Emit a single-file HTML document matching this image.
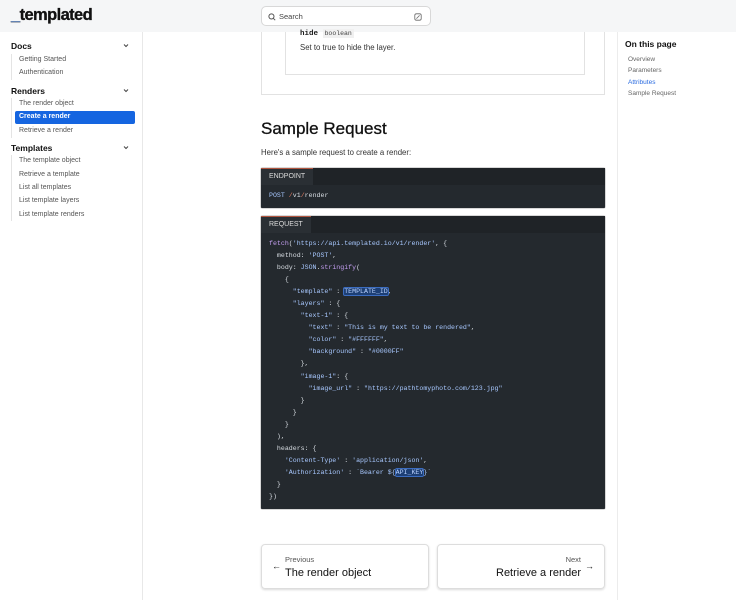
<!DOCTYPE html>
<html><head><meta charset="utf-8"><style>
*{box-sizing:border-box;margin:0;padding:0}
body{width:736px;height:600px;overflow:hidden;background:#fff;font-family:"Liberation Sans",sans-serif;color:#1a1a1a;position:relative}
.hdr{position:absolute;left:0;top:0;width:736px;height:32px;background:#f5f6f7;z-index:5}
.logo{position:absolute;left:11px;top:6px;font-size:16.5px;font-weight:bold;letter-spacing:-0.6px;color:#111;-webkit-text-stroke:0.3px #111}
.logo span{color:#1565e0}
.search{position:absolute;left:261px;top:6px;width:170px;height:20px;border:1px solid #d8d8d8;border-radius:5px;background:#fff;font-size:7.5px;color:#444;padding:5px 0 0 17px}
.side{position:absolute;left:0;top:32px;width:143px;height:568px;border-right:1px solid #e8e8e8}
.grp{position:absolute;left:11px;font-size:8.5px;font-weight:bold;color:#111}
.chev{position:absolute;left:123px}
.item{position:absolute;left:19px;font-size:7px;color:#555}
.vl{position:absolute;left:11px;width:1px;background:#e4e4e4}
.act{position:absolute;left:15px;width:120px;height:13px;background:#1565e0;border-radius:2px;color:#fff;font-size:7px;font-weight:bold;padding:2px 0 0 4px}
.rside{position:absolute;left:617px;top:32px;width:1px;height:568px;background:#ececec}
.toc h4{position:absolute;left:625px;top:39px;font-size:8.5px;color:#111}
.t{position:absolute;left:628px;font-size:6.5px;color:#666}
.box{position:absolute;left:261px;top:20px;width:344px;height:75px;border:1px solid #e2e2e2;border-top:none}
.inner{position:absolute;left:285px;top:20px;width:300px;height:55px;border:1px solid #e2e2e2;border-top:none}
.mono{font-family:"Liberation Mono",monospace}
h2{position:absolute;left:261px;top:119px;font-size:17px;font-weight:500;color:#111;-webkit-text-stroke:0.3px #111}
.p{position:absolute;left:261px;top:148px;font-size:7.8px;color:#333}
.code{position:absolute;left:261px;background:#24292e;border-radius:1px;box-shadow:0 0 1px #000}
.tab{height:17px;background:#1f2327;font-size:7px;color:#ddd;padding:4px 0 0 8px;position:relative}
.tab b{font-weight:normal;position:absolute;left:0;top:0;height:17px;background:#2a2f34;padding:4px 8px;border-top:1px solid #b0553f}
pre{font-family:"Liberation Mono",monospace;font-size:6.6px;line-height:12.05px;color:#d8dde3;padding:0 8px}
.k{color:#a8c8ff}.s{color:#a8c8ff}.f{color:#c39ef0}.h{background:#1d3f75;outline:1px solid #3b6cc0;border-radius:1px;color:#b9d2ff}
.nav{position:absolute;top:544px;width:168px;height:45px;border:1px solid #ddd;border-radius:4px;box-shadow:0 1px 2px rgba(0,0,0,.15)}
.nav .a{position:absolute;top:10px;font-size:7.5px;color:#555}
.nav .b{position:absolute;top:22px;font-size:11px;color:#111}
.nav .ar{position:absolute;top:16px;font-size:9px;color:#222}
</style></head><body>
<div class="hdr"><div class="logo"><span>_</span>templated</div>
<div class="search"><svg style="position:absolute;left:6px;top:6px" width="8" height="8" viewBox="0 0 10 10"><circle cx="4.3" cy="4.3" r="3.2" fill="none" stroke="#555" stroke-width="1.2"/><path d="M6.6 6.6L9 9" stroke="#555" stroke-width="1.2"/></svg>Search<svg style="position:absolute;left:152px;top:6px" width="8" height="8" viewBox="0 0 10 10"><rect x="1" y="1" width="8" height="8" rx="2" fill="none" stroke="#666"/><path d="M3 7L7 3" stroke="#666"/></svg></div></div>

<div class="side">
<div class="grp" style="top:9px">Docs</div><svg class="chev" style="top:11px" width="6" height="5" viewBox="0 0 6 5"><path d="M1 1.5L3 3.5L5 1.5" fill="none" stroke="#444" stroke-width="1"/></svg>
<div class="vl" style="top:22px;height:26px"></div>
<div class="item" style="top:24px">Getting Started</div>
<div class="item" style="top:37px">Authentication</div>
<div class="grp" style="top:54px">Renders</div><svg class="chev" style="top:56px" width="6" height="5" viewBox="0 0 6 5"><path d="M1 1.5L3 3.5L5 1.5" fill="none" stroke="#444" stroke-width="1"/></svg>
<div class="vl" style="top:66px;height:40px"></div>
<div class="item" style="top:68px">The render object</div>
<div class="act" style="top:79px">Create a render</div>
<div class="item" style="top:95px">Retrieve a render</div>
<div class="grp" style="top:111px">Templates</div><svg class="chev" style="top:113px" width="6" height="5" viewBox="0 0 6 5"><path d="M1 1.5L3 3.5L5 1.5" fill="none" stroke="#444" stroke-width="1"/></svg>
<div class="vl" style="top:123px;height:66px"></div>
<div class="item" style="top:125px">The template object</div>
<div class="item" style="top:139px">Retrieve a template</div>
<div class="item" style="top:152px">List all templates</div>
<div class="item" style="top:165px">List template layers</div>
<div class="item" style="top:179px">List template renders</div>
</div>
<div class="rside"></div>
<div class="toc"><h4>On this page</h4>
<div class="t" style="top:56px">Overview</div>
<div class="t" style="top:67px">Parameters</div>
<div class="t" style="top:79px;color:#2a6be0">Attributes</div>
<div class="t" style="top:90px">Sample Request</div></div>

<div class="box"></div><div class="inner"></div>
<div class="mono" style="position:absolute;left:300px;top:30px;font-size:7.5px;font-weight:bold;z-index:6">hide <span style="font-weight:normal;font-size:6.5px;background:#f0f0f0;padding:1px 2px;color:#444">boolean</span></div>
<div style="position:absolute;left:300px;top:43px;font-size:7.8px;color:#333">Set to true to hide the layer.</div>

<h2>Sample Request</h2>
<div class="p">Here's a sample request to create a render:</div>

<div class="code" style="top:168px;width:344px;height:40px"><div class="tab"><b>ENDPOINT</b></div>
<pre style="padding-top:5px"><span class="k">POST</span> <span style="color:#e07a5f">/</span>v1<span style="color:#e07a5f">/</span>render</pre></div>

<div class="code" style="top:216px;width:344px;height:293px"><div class="tab"><b>REQUEST</b></div>
<pre style="padding-top:5px"><span class="f">fetch</span>(<span class="s">'https://api.templated.io/v1/render'</span>, {
  method: <span class="s">'POST'</span>,
  body: <span class="k">JSON</span>.<span class="f">stringify</span>(
    {
      <span class="s">"template"</span> : <span class="h">TEMPLATE_ID</span>,
      <span class="s">"layers"</span> : {
        <span class="s">"text-1"</span> : {
          <span class="s">"text"</span> : <span class="s">"This is my text to be rendered"</span>,
          <span class="s">"color"</span> : <span class="s">"#FFFFFF"</span>,
          <span class="s">"background"</span> : <span class="s">"#0000FF"</span>
        },
        <span class="s">"image-1"</span>: {
          <span class="s">"image_url"</span> : <span class="s">"https://pathtomyphoto.com/123.jpg"</span>
        }
      }
    }
  ),
  headers: {
    <span class="s">'Content-Type'</span> : <span class="s">'application/json'</span>,
    <span class="s">'Authorization'</span> : <span class="s">`Bearer ${<span class="h">API_KEY</span>}`</span>
  }
})</pre></div>

<div class="nav" style="left:261px"><div class="ar" style="left:10px">←</div><div class="a" style="left:23px">Previous</div><div class="b" style="left:23px">The render object</div></div>
<div class="nav" style="left:437px"><div class="a" style="right:23px">Next</div><div class="b" style="right:23px">Retrieve a render</div><div class="ar" style="right:10px">→</div></div>
</body></html>
